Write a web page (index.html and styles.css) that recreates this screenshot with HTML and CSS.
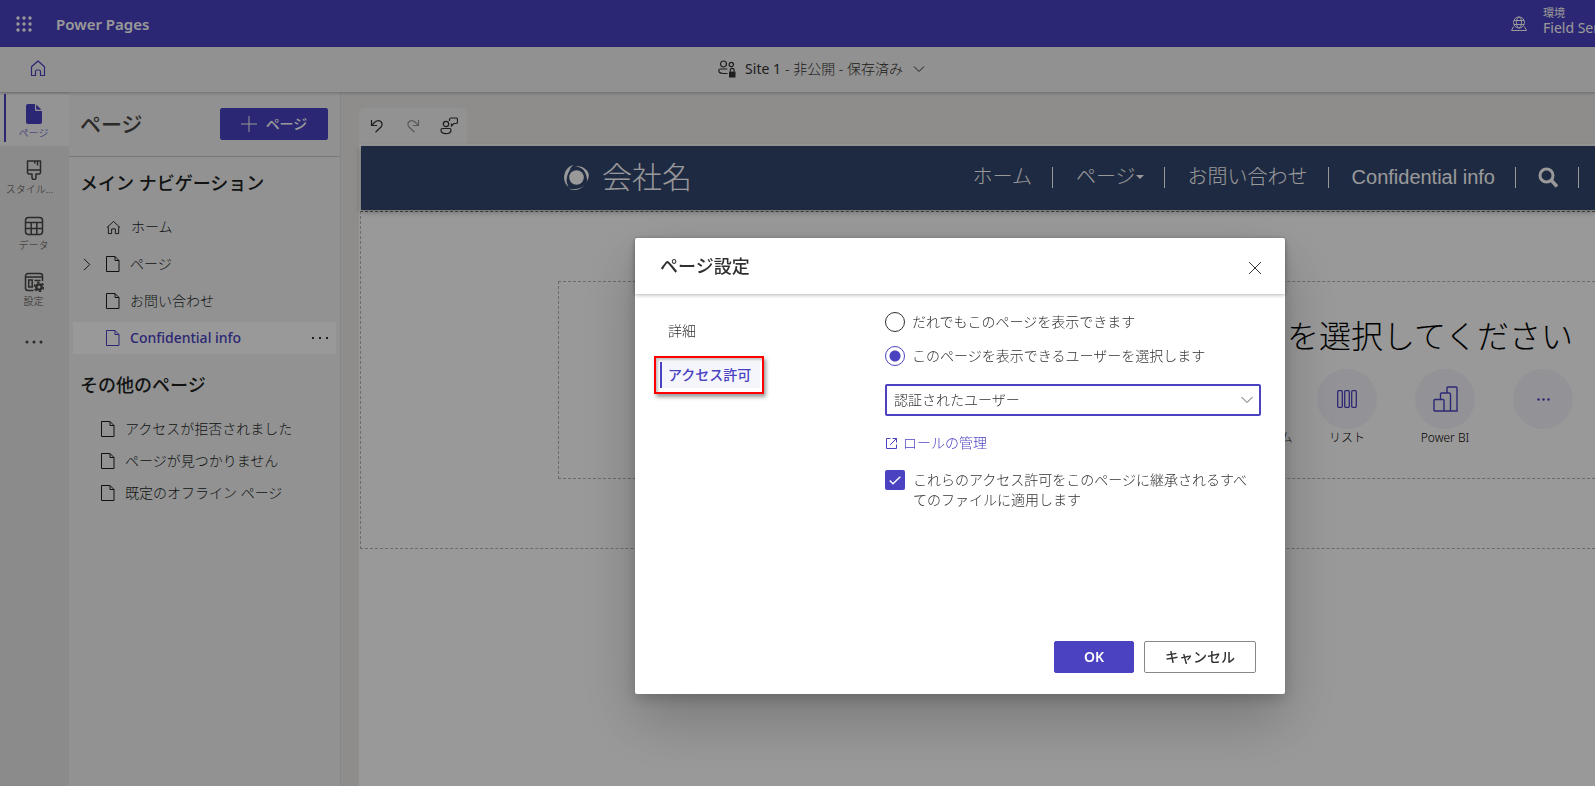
FILE: index.html
```html
<!DOCTYPE html>
<html lang="ja">
<head>
<meta charset="utf-8">
<title>Power Pages</title>
<link rel="stylesheet" href="styles.css">
</head>
<body>
<svg class="defs" aria-hidden="true">
  <symbol id="doc" viewBox="0 0 14 16"><path d="M.5.5h8.500l4 4v11H.5zM9 .5v4h4" fill="none" stroke="currentColor"/></symbol>
  <symbol id="home" viewBox="0 0 16 16"><path d="M1 8L8 1.500l7 6.500M2.500 7v7.500h3.500v-5h4v5h3.500V7" fill="none" stroke="currentColor"/></symbol>
  <symbol id="dots" viewBox="0 0 18 4"><path d="M1 1h2v2H1zM8 1h2v2H8zM15 1h2v2h-2z" fill="currentColor"/></symbol>
</svg>
<div class="app">
  <header class="topbar">
    <button class="icon-btn waffle" aria-label="アプリ起動ツール">
      <svg width="16" height="16" viewBox="0 0 16 16" fill="currentColor"><circle cx="2" cy="2" r="1.700"/><circle cx="8" cy="2" r="1.700"/><circle cx="14" cy="2" r="1.700"/><circle cx="2" cy="8" r="1.700"/><circle cx="8" cy="8" r="1.700"/><circle cx="14" cy="8" r="1.700"/><circle cx="2" cy="14" r="1.700"/><circle cx="8" cy="14" r="1.700"/><circle cx="14" cy="14" r="1.700"/></svg>
    </button>
    <span class="product">Power Pages</span>
    <div class="env">
      <svg width="18" height="16" viewBox="0 0 18 16" fill="none" stroke="currentColor"><circle cx="9" cy="6.500" r="5.500"/><ellipse cx="9" cy="6.500" rx="2.500" ry="5.500"/><path d="M4 4.500h10M4 8.500h10M3.500 10.500L1.500 14.500h15l-2-4"/></svg>
      <div class="env-text"><span class="env-label">環境</span><span class="env-name">Field Ser</span></div>
    </div>
  </header>

  <div class="subbar">
    <button class="icon-btn home-btn" aria-label="ホーム"><svg width="16" height="17" viewBox="0 0 16 17" fill="none" stroke="currentColor" stroke-width="1.200"><path d="M1.500 6.700L8 1l6.500 5.700v8.800H10.500v-4a1.500 1.500 0 0 0-1.500-1.500H7a1.500 1.500 0 0 0-1.500 1.500v4h-4z" stroke-linejoin="round"/></svg></button>
    <button class="site-switch">
      <svg width="18" height="18" viewBox="0 0 18 18" fill="none" stroke="currentColor" stroke-width="1.200"><circle cx="5.500" cy="4" r="3"/><circle cx="13.300" cy="4.500" r="2.200"/><path d="M9.500 13.500H5C2 13.500.8 12 .8 10.500q0-1.500 1.500-1.500h7"/><path d="M12.300 11.500V10.300a1.900 1.900 0 0 1 3.800 0v1.200"/><path d="M11 11.500h6.500v6H11z" fill="currentColor" stroke="none"/></svg>
      <span class="site-name">Site 1</span> <span class="site-state">- 非公開 - 保存済み</span>
      <svg class="chev" width="12" height="8" viewBox="0 0 12 8" fill="none" stroke="currentColor"><path d="M1 1.500l5 5 5-5"/></svg>
    </button>
  </div>

  <div class="body">
    <nav class="rail">
      <a class="rail-item active" href="#"><svg width="16" height="20" viewBox="0 0 16 20" fill="currentColor"><path d="M2 0h7v5.500A1.500 1.500 0 0 0 10.500 7H16v11a2 2 0 0 1-2 2H2a2 2 0 0 1-2-2V2a2 2 0 0 1 2-2z"/><path d="M10.200 .6v4.200q0 1 1 1h4.200z"/></svg><span>ページ</span></a>
      <a class="rail-item" href="#"><svg width="16" height="20" viewBox="0 0 16 20" fill="none" stroke="currentColor" stroke-width="1.500" stroke-linejoin="round"><path d="M1.500 1h13v11.500a1.500 1.500 0 0 1-1.500 1.500h-3v3.500a2 2 0 0 1-4 0V14H3a1.500 1.500 0 0 1-1.500-1.500zM1.500 10h13M8.700 1v2.500M11.500 1v4.500"/></svg><span class="long">スタイル...</span></a>
      <a class="rail-item" href="#"><svg width="20" height="20" viewBox="0 0 20 20" fill="none" stroke="currentColor" stroke-width="1.500"><rect x="1.500" y="1.500" width="17" height="17" rx="3"/><path d="M1.500 6.500h17M1.500 12.500h17M7.200 6.500v12M12.800 6.500v12"/></svg><span>データ</span></a>
      <a class="rail-item" href="#"><svg width="20" height="20" viewBox="0 0 20 20" fill="none" stroke="currentColor" stroke-width="1.500"><path d="M9.500 18.500H4a2.500 2.500 0 0 1-2.500-2.500V4A2.500 2.500 0 0 1 4 1.500h12A2.500 2.500 0 0 1 18.500 4v5M1.500 5h17M4.700 8h3.500v7H4.700zM10.500 8.500h6"/><circle cx="15" cy="15" r="2.700" stroke-width="2.300"/><circle cx="15" cy="15" r="4.600" stroke-width="1.600" stroke-dasharray="2.400 2.400"/></svg><span>設定</span></a>
      <a class="rail-item more" href="#" aria-label="その他"><svg width="18" height="4" viewBox="0 0 18 4" fill="currentColor"><circle cx="2" cy="2" r="1.500"/><circle cx="9" cy="2" r="1.500"/><circle cx="16" cy="2" r="1.500"/></svg></a>
    </nav>

    <aside class="panel">
      <div class="panel-head">
        <h1>ページ</h1>
        <button class="btn primary add"><svg width="16" height="16" viewBox="0 0 16 16" stroke="currentColor"><path d="M8 0v16M0 8h16"/></svg>ページ</button>
      </div>
      <h2>メイン ナビゲーション</h2>
      <ul class="tree">
        <li><a href="#"><span class="exp"></span><svg width="15" height="15"><use href="#home"/></svg><span>ホーム</span></a></li>
        <li><a href="#"><span class="exp"><svg width="8" height="13" viewBox="0 0 8 13" fill="none" stroke="currentColor"><path d="M1 .8l5.700 5.700L1 12.200"/></svg></span><svg width="14" height="16"><use href="#doc"/></svg><span>ページ</span></a></li>
        <li><a href="#"><span class="exp"></span><svg width="14" height="16"><use href="#doc"/></svg><span>お問い合わせ</span></a></li>
        <li class="selected"><a href="#"><span class="exp"></span><svg width="14" height="16"><use href="#doc"/></svg><span>Confidential info</span></a><button class="icon-btn" aria-label="その他の操作"><svg width="18" height="4"><use href="#dots"/></svg></button></li>
      </ul>
      <h2>その他のページ</h2>
      <ul class="others">
        <li><a href="#"><svg width="14" height="16"><use href="#doc"/></svg><span>アクセスが拒否されました</span></a></li>
        <li><a href="#"><svg width="14" height="16"><use href="#doc"/></svg><span>ページが見つかりません</span></a></li>
        <li><a href="#"><svg width="14" height="16"><use href="#doc"/></svg><span>既定のオフライン ページ</span></a></li>
      </ul>
    </aside>

    <main class="stage">
      <div class="tools">
        <button class="icon-btn" aria-label="元に戻す"><svg width="14" height="14" viewBox="0 0 14 14" fill="none" stroke="currentColor" stroke-width="1.200"><path d="M1.500 1v5.500H7M1.700 6.300L5 3Q8 .3 10.800 2.500 13.300 5.200 11 8L5.500 13.300"/></svg></button>
        <button class="icon-btn" aria-label="やり直し" disabled><svg width="14" height="14" viewBox="0 0 14 14" fill="none" stroke="currentColor" stroke-width="1.200"><path d="M12.500 1v5.500H7M12.300 6.300L9 3Q6 .3 3.200 2.500.7 5.200 3 8l5.500 5.300"/></svg></button>
        <button class="icon-btn" aria-label="フィードバック"><svg width="18" height="18" viewBox="0 0 18 18" fill="none" stroke="currentColor" stroke-width="1.200"><circle cx="6" cy="7" r="2.700"/><path d="M1 13a1.500 1.500 0 0 1 1.500-1.500h7A1.500 1.500 0 0 1 11 13q0 3.700-5 3.700T1 13zM9.500 4V2.500A1.500 1.500 0 0 1 11 1h5a1.500 1.500 0 0 1 1.500 1.500V5A1.500 1.500 0 0 1 16 6.500h-2l-2.500 2.300V6.500"/></svg></button>
      </div>
      <div class="page">
        <div class="site-head">
          <a class="brand" href="#"><svg width="27" height="27" viewBox="0 0 27 27" fill="currentColor"><circle cx="13.500" cy="13.500" r="7.300"/><path d="M10.500.8A13 13 0 0 0 5.500 23Q-.5 11 10.500.8zM11.500 2.800Q22.500 1.500 24.300 17 27.500 11 24 6.500 18.500.8 11.500 2.800zM5.500 24.500Q15 29 22.500 20 26 15.500 25.500 11.500 24.500 22 15.500 24.500 10 25.800 5.500 24.500zM8 4.500Q1 9 3.500 17 4 9 8 4.500z"/></svg><span>会社名</span></a>
          <nav class="site-nav">
            <a href="#">ホーム</a>
            <a href="#">ページ<i class="caret"></i></a>
            <a href="#">お問い合わせ</a>
            <a href="#">Confidential info</a>
            <a href="#" aria-label="検索"><svg width="21" height="21" viewBox="0 0 21 21" fill="none" stroke="currentColor" stroke-width="3"><circle cx="8.500" cy="8.500" r="6.500"/><path d="M13 13l6 6.500" stroke-width="3.500"/></svg></a>
          </nav>
        </div>
        <section class="zone">
          <div class="picker">
            <p class="ask">を選択してください</p>
            <ul class="kinds">
              <li><span class="disc"></span><span>複数の フォーム</span></li>
              <li><span class="disc"><svg width="20" height="18" viewBox="0 0 20 18" fill="none" stroke="currentColor" stroke-width="1.300"><rect x=".7" y=".7" width="4.600" height="16.600" rx="1"/><rect x="7.700" y=".7" width="4.600" height="16.600" rx="1"/><rect x="14.700" y=".7" width="4.600" height="16.600" rx="1"/></svg></span><span>リスト</span></li>
              <li><span class="disc"><svg width="25" height="26" viewBox="0 0 25 26" fill="none" stroke="currentColor" stroke-width="1.400"><path d="M1 25V14.500a1 1 0 0 1 1-1h8a1 1 0 0 1 1 1V25M7.500 13.500V8a1 1 0 0 1 1-1H16a1.500 1.500 0 0 1 1.500 1.500V25M14 7V2a1 1 0 0 1 1-1h8a1 1 0 0 1 1 1v23H1"/></svg></span><span>Power BI</span></li>
              <li><span class="disc"><svg width="13" height="3" viewBox="0 0 13 3" fill="currentColor"><circle cx="1.500" cy="1.500" r="1.200"/><circle cx="6.500" cy="1.500" r="1.200"/><circle cx="11.500" cy="1.500" r="1.200"/></svg></span></li>
            </ul>
          </div>
        </section>
      </div>
    </main>
  </div>
</div>

<div class="overlay">
  <div class="dialog" role="dialog" aria-labelledby="dlg-title">
    <header class="dlg-head">
      <h2 id="dlg-title">ページ設定</h2>
      <button class="icon-btn" aria-label="閉じる"><svg width="14" height="14" viewBox="0 0 14 14" stroke="currentColor"><path d="M1 1l12 12M13 1L1 13"/></svg></button>
    </header>
    <div class="dlg-body">
      <nav class="tabs">
        <a href="#">詳細</a>
        <a href="#" class="current">アクセス許可</a>
      </nav>
      <form class="perm">
        <label class="radio"><input type="radio" name="who"><span>だれでもこのページを表示できます</span></label>
        <label class="radio"><input type="radio" name="who" checked><span>このページを表示できるユーザーを選択します</span></label>
        <div class="select-wrap">
          <select aria-label="ロール"><option>認証されたユーザー</option></select>
          <svg width="12" height="8" viewBox="0 0 12 8" fill="none" stroke="currentColor"><path d="M.5 1L6 6.500 11.500 1"/></svg>
        </div>
        <a class="roles" href="#"><svg width="11" height="11" viewBox="0 0 11 11" fill="none" stroke="currentColor"><path d="M4.500.5h-4v10h10V6.500M6.500.5h4v4M10.500.5L4 7"/></svg>ロールの管理</a>
        <label class="check"><input type="checkbox" checked><svg width="12" height="9" viewBox="0 0 12 9" fill="none" stroke="currentColor" stroke-width="1.400"><path d="M.7 4.500L4 7.800 11.300.7"/></svg><span>これらのアクセス許可をこのページに継承されるすべてのファイルに適用します</span></label>
      </form>
    </div>
    <footer class="dlg-foot">
      <button class="btn primary ok">OK</button>
      <button class="btn cancel">キャンセル</button>
    </footer>
  </div>
</div>
</body>
</html>
```

FILE: styles.css
```css
:root {
  --purple: #4a42c1;
  --ink: #323130;
  --grey: #f2f2f2;
}
* { box-sizing: border-box; }
body {
  margin: 0;
  overflow: hidden;
  font: 300 14px/20px "Noto Sans", "Noto Sans CJK JP", sans-serif;
  color: var(--ink);
}
a { color: inherit; text-decoration: none; }
ul { margin: 0; padding: 0; list-style: none; }
h1, h2, p { margin: 0; }
svg { flex: none; display: block; }
button { font: inherit; color: inherit; cursor: pointer; }
.defs { position: absolute; width: 0; height: 0; }
.icon-btn {
  display: grid;
  place-items: center;
  padding: 0;
  border: 0;
  background: none;
}
.btn {
  display: flex;
  align-items: center;
  justify-content: center;
  height: 32px;
  padding: 0;
  border: 1px solid #8a8886;
  border-radius: 2px;
  background: #fff;
  font-weight: 500;
}
.btn.primary { background: var(--purple); border-color: var(--purple); color: #fff; }

.app { display: flex; flex-direction: column; height: 100vh; overflow: hidden; isolation: isolate; }

.topbar {
  display: flex;
  align-items: center;
  flex: none;
  height: 47px;
  background: var(--purple);
  color: #fff;
}
.waffle { width: 48px; height: 47px; }
.product { padding-left: 8px; font-size: 15px; font-weight: 600; }
.env { display: flex; align-items: center; gap: 15px; margin-left: auto; }
.env-text { display: flex; flex-direction: column; width: 52px; padding-bottom: 6px; overflow: hidden; white-space: nowrap; font-weight: 400; }
.env-label { font-size: 11px; line-height: 14px; }
.env-name { line-height: 16px; }

.subbar {
  display: flex;
  align-items: center;
  flex: none;
  height: 45px;
  padding-bottom: 2px;
  background: var(--grey);
  box-shadow: 0 1px 3px rgba(0, 0, 0, .25);
  z-index: 1;
}
.home-btn { width: 76px; height: 43px; color: var(--purple); }
.site-switch {
  display: flex;
  align-items: center;
  gap: 4px;
  margin: 0 auto;
  padding: 0 28px 0 0;
  border: 0;
  background: none;
}
.site-name { padding-left: 5px; font-weight: 400; }
.chev { margin-left: 6px; }

.body { display: flex; flex: 1; min-height: 0; }

.rail { flex: none; width: 69px; padding-top: 2px; background: #e8e8e8; color: #484644; }
.rail-item {
  display: flex;
  flex-direction: column;
  align-items: center;
  gap: 2px;
  height: 56px;
  padding: 14px 2px 0 0;
  font-size: 10px;
  line-height: 14px;
}
.rail-item.active {
  height: 52px;
  padding-top: 10px;
  background: linear-gradient(var(--purple), var(--purple)) 4px 0 / 2px 48px no-repeat #f7f7f7;
  color: var(--purple);
}
.rail-item.more { padding-top: 26px; }
.rail-item .long { padding-right: 8px; }

.panel { flex: none; width: 272px; background: #f4f4f4; border-right: 1px solid #e0e0e0; color: #201f1e; }
.panel-head {
  display: flex;
  align-items: center;
  justify-content: space-between;
  height: 65px;
  padding: 0 12px 0 11px;
  background: var(--grey);
  border-bottom: 1px solid #c8c8c8;
}
.panel h1 { font-size: 21px; font-weight: 500; color: #484644; }
.panel h2 { padding: 0 11px; font-size: 18px; line-height: 24px; font-weight: 500; }
.panel-head + h2 { margin-top: 14px; }
.add { width: 108px; gap: 9px; }
.tree { display: grid; gap: 5px; margin: 16px 4px 19px 4px; }
.tree li { display: flex; align-items: center; height: 32px; }
.tree a, .others a { display: flex; align-items: center; gap: 10px; flex: 1; }
.exp { width: 23px; padding-left: 10px; }
.selected { background: #fff; color: var(--purple); font-weight: 500; }
.selected .icon-btn { width: 32px; height: 32px; color: var(--ink); }
.others { margin-top: 16px; padding-left: 32px; }
.others a { height: 32px; }

.stage { display: flex; flex-direction: column; flex: 1; min-width: 0; padding: 16px 0 0 18px; background: #edebe9; }
.tools {
  display: flex;
  flex: none;
  width: 108px;
  height: 36px;
  border-radius: 6px 6px 0 0;
  background: #f4f4f4;
}
.tools .icon-btn { flex: 1; }
.tools .icon-btn:disabled { color: #979593; }
.page { flex: 1; padding-top: 2px; background: #fff; }
.site-head {
  display: flex;
  align-items: center;
  justify-content: space-between;
  height: 64px;
  margin: 0 0 1px 2px;
  padding: 0 16px 2px 202px;
  background: #32466e;
  color: #fff;
  box-shadow: 0 2px 6px rgba(0, 0, 0, .3);
}
.brand { display: flex; align-items: center; gap: 12px; font-size: 30px; line-height: 40px; }
.site-nav { display: flex; align-items: center; font: 300 20px/21px "Liberation Sans", "Noto Sans CJK JP", sans-serif; }
.site-nav a { display: flex; align-items: center; height: 21px; padding: 0 20px 0 23px; border-right: 1px solid #fff; }
.site-nav a:last-child { padding: 0 19px 0 22px; }
.caret { border: 4px solid transparent; border-top-color: #fff; border-bottom: 0; }
.zone { height: 338px; margin-left: 1px; padding: 69px 0 0 197px; border: 1px dashed #b4b4b4; border-top-color: #605e5c; border-right: 0; }
.picker {
  display: flex;
  flex-direction: column;
  align-items: flex-end;
  height: 198px;
  padding: 30px 22px 0 0;
  border: 1px dashed #b4b4b4;
  border-right: 0;
  color: #000;
}
.ask { font-size: 32px; line-height: 48px; }
.kinds { display: flex; gap: 38px; margin-top: 9px; font-size: 12px; line-height: 18px; white-space: nowrap; }
.kinds li { display: flex; flex-direction: column; align-items: center; width: 60px; }
.disc { display: grid; place-items: center; width: 60px; height: 60px; border-radius: 50%; background: #f5f5fc; color: var(--purple); }

.overlay { position: fixed; inset: 0; z-index: 2; background: rgba(0, 0, 0, .4); }
.dialog {
  position: absolute;
  left: 635px;
  top: 238px;
  display: flex;
  flex-direction: column;
  width: 650px;
  min-height: 456px;
  border-radius: 2px;
  background: #fff;
  box-shadow: 0 26px 58px rgba(0, 0, 0, .22), 0 5px 14px rgba(0, 0, 0, .18);
}
.dlg-head {
  display: flex;
  align-items: flex-start;
  justify-content: space-between;
  height: 56px;
  padding: 14px 14px 0 25px;
  box-shadow: 0 1px 4px rgba(0, 0, 0, .3);
}
.dlg-head h2 { font-size: 18px; line-height: 28px; font-weight: 500; }
.dlg-head .icon-btn { width: 32px; height: 32px; }
.dlg-body { display: flex; flex: 1; padding: 16px 24px 0 25px; }
.tabs { display: flex; flex-direction: column; align-items: flex-start; gap: 18px; width: 225px; padding-top: 8px; }
.tabs a { display: flex; align-items: center; height: 26px; padding: 0 8px; }
.tabs .current {
  position: relative;
  padding: 0 9px 0 6px;
  border-left: 2px solid var(--purple);
  background: #f5f5fc;
  color: var(--purple);
  font-weight: 500;
}
.tabs .current::after {
  content: "";
  position: absolute;
  inset: -6px -4px -6px -8px;
  border: 2px solid #f00;
  box-shadow: 2px 3px 4px rgba(0, 0, 0, .4), inset 2px 2px 3px rgba(0, 0, 0, .25);
}
.perm { flex: 1; min-width: 0; }
.radio { display: flex; align-items: center; gap: 7px; height: 24px; margin-bottom: 10px; }
.radio input, .check input { appearance: none; flex: none; width: 20px; height: 20px; margin: 0; }
.radio input { border: 1px solid var(--ink); border-radius: 50%; }
.radio input:checked { border-color: var(--purple); background: radial-gradient(circle, var(--purple) 5px, #fff 6px); }
.select-wrap { display: grid; align-items: center; margin: 16px 0 17px; }
.select-wrap > * { grid-area: 1 / 1; }
.select-wrap svg { justify-self: end; margin-right: 8px; pointer-events: none; color: #605e5c; }
select {
  appearance: none;
  width: 100%;
  height: 32px;
  padding: 0 28px 0 7px;
  border: 2px solid var(--purple);
  border-radius: 2px;
  background: #fff;
  font: inherit;
  color: inherit;
}
.roles { display: flex; align-items: center; gap: 6px; width: fit-content; padding-left: 1px; color: var(--purple); }
.check { display: grid; grid-template-columns: 20px 1fr; gap: 8px; margin-top: 17px; padding-right: 8px; }
.check input { grid-area: 1 / 1; border-radius: 2px; background: var(--purple); }
.check svg { grid-area: 1 / 1; justify-self: center; margin-top: 6px; color: #fff; z-index: 1; }
.dlg-foot { display: flex; justify-content: flex-end; gap: 10px; padding: 0 29px 21px; }
.ok { width: 80px; font-weight: 600; }
.cancel { width: 112px; }
```
